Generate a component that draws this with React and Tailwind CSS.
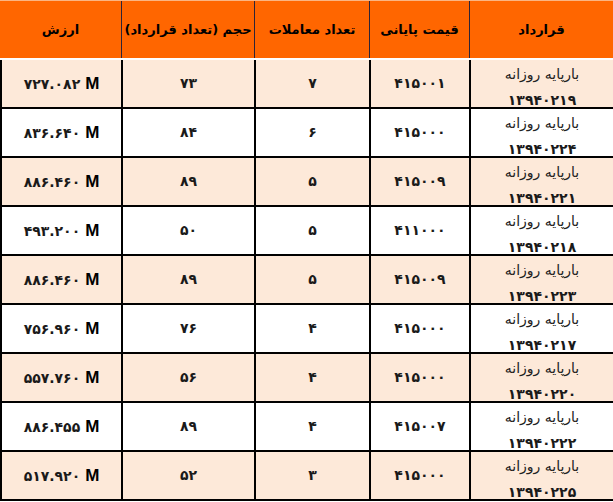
const rows = [
  ["727.082", "73", "7", "415001", "13940219"],
  ["836.640", "84", "6", "415000", "13940224"],
  ["886.460", "89", "5", "415009", "13940221"],
  ["493.200", "50", "5", "411000", "13940218"],
  ["886.460", "89", "5", "415009", "13940223"],
  ["756.960", "76", "4", "415000", "13940217"],
  ["557.760", "56", "4", "415000", "13940220"],
  ["886.455", "89", "4", "415007", "13940222"],
  ["517.920", "52", "3", "415000", "13940225"],
];

const fa = (s) => s.replace(/[0-9]/g, (d) => "۰۱۲۳۴۵۶۷۸۹"[d]);

const persian = { fontFamily: '"DejaVu Sans", "Noto Sans", sans-serif' };

function HeadCell({ children, className = "" }) {
  return (
    <div
      className={`flex items-center justify-center whitespace-nowrap font-bold text-[13px] text-black ${className}`}
    >
      {children}
    </div>
  );
}

export default function App() {
  return (
    <div dir="rtl" className="w-[613px] h-[502px] bg-white" style={persian}>
      <div className="flex h-[58px] bg-[#ff6600] border-t border-[#fbb583]">
        <HeadCell className="w-[144px] border-l border-[#2d2438]">قرارداد</HeadCell>
        <HeadCell className="w-[100px] border-l border-[#2d2438]">قیمت پایانی</HeadCell>
        <HeadCell className="w-[115px] border-l border-[#2d2438]">تعداد معاملات</HeadCell>
        <HeadCell className="w-[133px] border-l border-[#2d2438]">حجم (تعداد قرارداد)</HeadCell>
        <HeadCell className="flex-1">ارزش</HeadCell>
      </div>
      <div className="h-[2px] bg-white" />
      <div className="border-l-2 border-black">
        {rows.map(([value, volume, count, price, code], i) => (
          <div
            key={code}
            className={`flex h-[49px] border-b-2 border-black text-[14px] text-[#1a1a1a] ${
              i % 2 === 0 ? "bg-[#fde9d9]" : "bg-white"
            }`}
          >
            <div className="w-[144px] border-l-2 border-black flex flex-col items-center pt-[1px]">
              <div className="h-[26px] leading-[26px] text-[14px] text-[#222]">بارپایه روزانه</div>
              <div className="h-[26px] leading-[26px] font-bold">{fa(code)}</div>
            </div>
            <div className="w-[100px] border-l-2 border-black flex items-center justify-center font-bold">
              {fa(price)}
            </div>
            <div className="w-[115px] border-l-2 border-black flex items-center justify-center font-bold">
              {fa(count)}
            </div>
            <div className="w-[133px] border-l-2 border-black flex items-center justify-center font-bold">
              {fa(volume)}
            </div>
            <div className="flex-1 flex items-center justify-center font-bold">
              <span dir="ltr" className="flex items-baseline gap-[5px]">
                <span>{fa(value)}</span>
                <span
                  className="text-[17px] font-bold text-black"
                  style={{ fontFamily: '"Liberation Sans", Arial, sans-serif' }}
                >
                  M
                </span>
              </span>
            </div>
          </div>
        ))}
      </div>
    </div>
  );
}
